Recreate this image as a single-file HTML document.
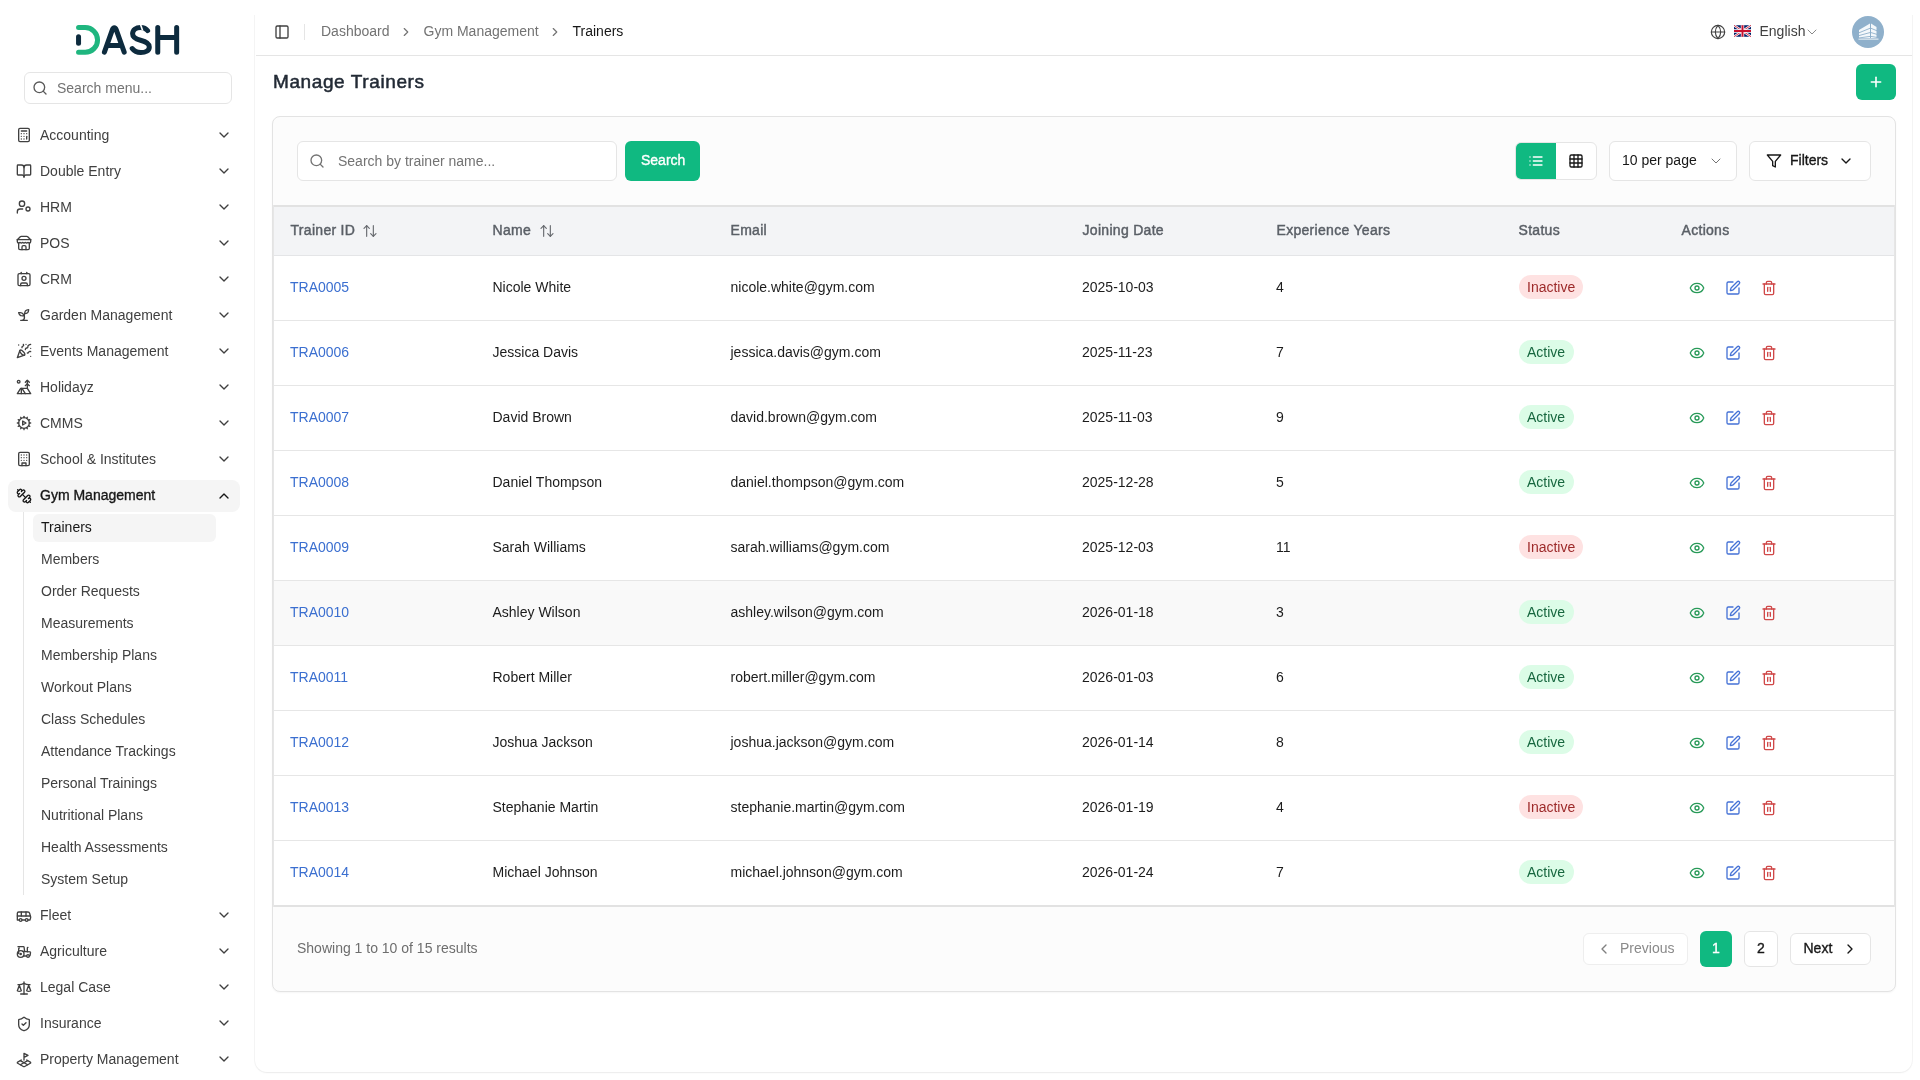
<!DOCTYPE html>
<html><head><meta charset="utf-8"><title>Manage Trainers</title>
<style>
*{box-sizing:border-box;margin:0;padding:0}
html,body{width:1920px;height:1080px;overflow:hidden;background:#fff}
body{position:relative;font-family:"Liberation Sans",sans-serif;color:#262626}
#root{position:absolute;left:0;top:0;width:1920px;height:1080px;will-change:transform}
.abs{position:absolute}
.t{position:absolute;white-space:nowrap}
svg.ic{position:absolute;fill:none;stroke:currentColor;stroke-linecap:round;stroke-linejoin:round;overflow:visible}
</style></head><body><div id="root">
<svg class="abs" style="left:70px;top:20px;width:115px;height:40px" viewBox="70 20 115 40">
<g fill="none" stroke-linecap="round" stroke-linejoin="round" stroke-width="5">
<path d="M78.55 27.55 H85.2 A12.35 12.35 0 0 1 85.2 52.25 H78.55" stroke="#1fb67f"/>
<path d="M78.55 36.7 V43.2" stroke="#0d2b3e"/>
<path d="M104.4 52.2 L112.4 29.6 Q113.1 27.7 114.3 27.7 Q115.5 27.7 116.2 29.6 L124.2 52.2 M107.6 45.4 H121" stroke="#0d2b3e"/>
<path d="M147.6 30.6 C146 28.4 143.5 27.4 140.5 27.4 C136 27.4 132.6 30 132.6 33.8 C132.6 38 136.5 39.3 140.5 40.3 C145 41.4 149.3 42.8 149.3 47 C149.3 50.8 145.5 52.6 140.8 52.6 C136.8 52.6 134 51 132.2 48.6" stroke="#0d2b3e"/>
<path d="M157.75 27.6 V52.3 M176.65 27.6 V52.3 M157.75 37.5 H176.65" stroke="#0d2b3e"/>
<path d="M140.2 23.5 L142.6 30.5" stroke="#fff" stroke-width="1.6" stroke-linecap="butt"/>
</g></svg>
<div class="abs" style="left:24px;top:72px;width:208px;height:32px;border:1px solid #e5e5e5;border-radius:6px;background:#fff"></div>
<svg class="ic" style="left:31.5px;top:80px;width:16px;height:16px;color:#595959;stroke-width:2" viewBox="0 0 24 24"><circle cx="11" cy="11" r="8"/><path d="m21 21-4.3-4.3"/></svg>
<div class="t" style="left:57px;top:78.0px;font-size:14px;line-height:20px;color:#737373;font-weight:400">Search menu...</div>
<svg class="ic" style="left:16px;top:127px;width:16px;height:16px;color:#404040;stroke-width:2" viewBox="0 0 24 24"><rect width="16" height="20" x="4" y="2" rx="2"/><line x1="8" x2="16" y1="6" y2="6"/><line x1="16" x2="16" y1="14" y2="18"/><path d="M16 10h.01"/><path d="M12 10h.01"/><path d="M8 10h.01"/><path d="M12 14h.01"/><path d="M8 14h.01"/><path d="M12 18h.01"/><path d="M8 18h.01"/></svg>
<div class="t" style="left:40px;top:125.0px;font-size:14px;line-height:20px;color:#404040;font-weight:400">Accounting</div>
<svg class="ic" style="left:216px;top:127px;width:16px;height:16px;color:#404040;stroke-width:2" viewBox="0 0 24 24"><path d="m6 9 6 6 6-6"/></svg>
<svg class="ic" style="left:16px;top:163px;width:16px;height:16px;color:#404040;stroke-width:2" viewBox="0 0 24 24"><path d="M12 7v14"/><path d="M3 18a1 1 0 0 1-1-1V4a1 1 0 0 1 1-1h5a4 4 0 0 1 4 4 4 4 0 0 1 4-4h5a1 1 0 0 1 1 1v13a1 1 0 0 1-1 1h-6a3 3 0 0 0-3 3 3 3 0 0 0-3-3z"/></svg>
<div class="t" style="left:40px;top:161.0px;font-size:14px;line-height:20px;color:#404040;font-weight:400">Double Entry</div>
<svg class="ic" style="left:216px;top:163px;width:16px;height:16px;color:#404040;stroke-width:2" viewBox="0 0 24 24"><path d="m6 9 6 6 6-6"/></svg>
<svg class="ic" style="left:16px;top:199px;width:16px;height:16px;color:#404040;stroke-width:2" viewBox="0 0 24 24"><circle cx="18" cy="15" r="3"/><circle cx="9" cy="7" r="4"/><path d="M10 15H6a4 4 0 0 0-4 4v2"/></svg>
<div class="t" style="left:40px;top:197.0px;font-size:14px;line-height:20px;color:#404040;font-weight:400">HRM</div>
<svg class="ic" style="left:216px;top:199px;width:16px;height:16px;color:#404040;stroke-width:2" viewBox="0 0 24 24"><path d="m6 9 6 6 6-6"/></svg>
<svg class="ic" style="left:16px;top:235px;width:16px;height:16px;color:#404040;stroke-width:2" viewBox="0 0 24 24"><path d="m2 7 4.41-4.41A2 2 0 0 1 7.83 2h8.34a2 2 0 0 1 1.42.59L22 7"/><path d="M4 12v8a2 2 0 0 0 2 2h12a2 2 0 0 0 2-2v-8"/><path d="M15 22v-4a2 2 0 0 0-2-2h-2a2 2 0 0 0-2 2v4"/><path d="M2 7h20"/><path d="M22 7v3a2 2 0 0 1-2 2a2.7 2.7 0 0 1-1.59-.63.7.7 0 0 0-.82 0A2.7 2.7 0 0 1 16 12a2.7 2.7 0 0 1-1.59-.63.7.7 0 0 0-.82 0A2.7 2.7 0 0 1 12 12a2.7 2.7 0 0 1-1.59-.63.7.7 0 0 0-.82 0A2.7 2.7 0 0 1 8 12a2.7 2.7 0 0 1-1.59-.63.7.7 0 0 0-.82 0A2.7 2.7 0 0 1 4 12a2 2 0 0 1-2-2V7"/></svg>
<div class="t" style="left:40px;top:233.0px;font-size:14px;line-height:20px;color:#404040;font-weight:400">POS</div>
<svg class="ic" style="left:216px;top:235px;width:16px;height:16px;color:#404040;stroke-width:2" viewBox="0 0 24 24"><path d="m6 9 6 6 6-6"/></svg>
<svg class="ic" style="left:16px;top:271px;width:16px;height:16px;color:#404040;stroke-width:2" viewBox="0 0 24 24"><path d="M16 2v2"/><path d="M7 22v-2a2 2 0 0 1 2-2h6a2 2 0 0 1 2 2v2"/><path d="M8 2v2"/><circle cx="12" cy="11" r="3"/><rect x="3" y="4" width="18" height="18" rx="2"/></svg>
<div class="t" style="left:40px;top:269.0px;font-size:14px;line-height:20px;color:#404040;font-weight:400">CRM</div>
<svg class="ic" style="left:216px;top:271px;width:16px;height:16px;color:#404040;stroke-width:2" viewBox="0 0 24 24"><path d="m6 9 6 6 6-6"/></svg>
<svg class="ic" style="left:16px;top:307px;width:16px;height:16px;color:#404040;stroke-width:2" viewBox="0 0 24 24"><path d="M7 20h10"/><path d="M10 20c5.5-2.5.8-6.4 3-10"/><path d="M9.5 9.4c1.1.8 1.8 2.2 2.3 3.7-2 .4-3.5.4-4.8-.3-1.2-.6-2.3-1.9-3-4.2 2.8-.5 4.4 0 5.5.8z"/><path d="M14.1 6a7 7 0 0 0-1.1 4c1.9-.1 3.3-.6 4.3-1.4 1-1 1.6-2.3 1.7-4.6-2.7.1-4 1-4.9 2z"/></svg>
<div class="t" style="left:40px;top:305.0px;font-size:14px;line-height:20px;color:#404040;font-weight:400">Garden Management</div>
<svg class="ic" style="left:216px;top:307px;width:16px;height:16px;color:#404040;stroke-width:2" viewBox="0 0 24 24"><path d="m6 9 6 6 6-6"/></svg>
<svg class="ic" style="left:16px;top:343px;width:16px;height:16px;color:#404040;stroke-width:2" viewBox="0 0 24 24"><path d="M5.8 11.3 2 22l10.7-3.79"/><path d="M4 3h.01"/><path d="M22 8h.01"/><path d="M15 2h.01"/><path d="M22 20h.01"/><path d="m22 2-2.24.75a2.9 2.9 0 0 0-1.96 3.12c.1.86-.57 1.63-1.45 1.63h-.38c-.86 0-1.6.6-1.76 1.44L14 10"/><path d="m22 13-.82-.33c-.86-.34-1.82.2-1.98 1.11c-.11.7-.72 1.22-1.43 1.22H17"/><path d="m11 2 .33.82c.34.86-.2 1.82-1.11 1.98C9.52 4.9 9 5.52 9 6.23V7"/><path d="M11 13c1.93 1.93 2.83 4.17 2 5-.83.83-3.07-.07-5-2-1.93-1.930-2.83-4.17-2-5 .83-.83 3.07.07 5 2Z"/></svg>
<div class="t" style="left:40px;top:341.0px;font-size:14px;line-height:20px;color:#404040;font-weight:400">Events Management</div>
<svg class="ic" style="left:216px;top:343px;width:16px;height:16px;color:#404040;stroke-width:2" viewBox="0 0 24 24"><path d="m6 9 6 6 6-6"/></svg>
<svg class="ic" style="left:16px;top:379px;width:16px;height:16px;color:#404040;stroke-width:2" viewBox="0 0 24 24"><circle cx="4" cy="4" r="2"/><path d="m14 5 3-3 3 3"/><path d="m14 10 3-3 3 3"/><path d="M17 14V2"/><path d="M17 14H7l-5 8h20Z"/><path d="M8 14v8"/><path d="m9 14 5 8"/></svg>
<div class="t" style="left:40px;top:377.0px;font-size:14px;line-height:20px;color:#404040;font-weight:400">Holidayz</div>
<svg class="ic" style="left:216px;top:379px;width:16px;height:16px;color:#404040;stroke-width:2" viewBox="0 0 24 24"><path d="m6 9 6 6 6-6"/></svg>
<svg class="ic" style="left:16px;top:415px;width:16px;height:16px;color:#404040;stroke-width:2" viewBox="0 0 24 24"><path d="M12 20a8 8 0 1 0 0-16 8 8 0 0 0 0 16Z"/><path d="M12 2v2"/><path d="M12 22v-2"/><path d="m17 20.66-1-1.73"/><path d="m20.66 17-1.73-1"/><path d="m3.34 7 1.73 1"/><path d="M2 12h2"/><path d="M22 12h-2"/><path d="m20.66 7-1.73 1"/><path d="m3.34 17 1.73-1"/><path d="m17 3.34-1 1.73"/><path d="m7 3.34 1 1.73"/><path d="m7 20.66 1-1.73"/><path d="M10 9v6l5-3z"/></svg>
<div class="t" style="left:40px;top:413.0px;font-size:14px;line-height:20px;color:#404040;font-weight:400">CMMS</div>
<svg class="ic" style="left:216px;top:415px;width:16px;height:16px;color:#404040;stroke-width:2" viewBox="0 0 24 24"><path d="m6 9 6 6 6-6"/></svg>
<svg class="ic" style="left:16px;top:451px;width:16px;height:16px;color:#404040;stroke-width:2" viewBox="0 0 24 24"><rect width="16" height="20" x="4" y="2" rx="2" ry="2"/><path d="M9 22v-4h6v4"/><path d="M8 6h.01"/><path d="M16 6h.01"/><path d="M12 6h.01"/><path d="M12 10h.01"/><path d="M12 14h.01"/><path d="M16 10h.01"/><path d="M16 14h.01"/><path d="M8 10h.01"/><path d="M8 14h.01"/></svg>
<div class="t" style="left:40px;top:449.0px;font-size:14px;line-height:20px;color:#404040;font-weight:400">School & Institutes</div>
<svg class="ic" style="left:216px;top:451px;width:16px;height:16px;color:#404040;stroke-width:2" viewBox="0 0 24 24"><path d="m6 9 6 6 6-6"/></svg>
<div class="abs" style="left:8px;top:480px;width:232px;height:32px;border-radius:8px;background:#f5f5f5"></div>
<svg class="ic" style="left:16px;top:488px;width:16px;height:16px;color:#171717;stroke-width:2" viewBox="0 0 24 24"><path d="M14.4 14.4 9.6 9.6"/><path d="M18.657 21.485a2 2 0 1 1-2.829-2.828l-1.767 1.768a2 2 0 1 1-2.829-2.829l6.364-6.364a2 2 0 1 1 2.829 2.829l-1.768 1.767a2 2 0 1 1 2.828 2.829z"/><path d="m21.5 21.5-1.4-1.4"/><path d="M3.9 3.9 2.5 2.5"/><path d="M6.404 12.768a2 2 0 1 1-2.829-2.829l1.768-1.767a2 2 0 1 1-2.828-2.829l2.828-2.828a2 2 0 1 1 2.829 2.828l1.767-1.768a2 2 0 1 1 2.829 2.829z"/></svg>
<div class="t" style="left:40px;top:485.0px;font-size:14px;line-height:20px;color:#171717;font-weight:400;-webkit-text-stroke:0.35px currentColor">Gym Management</div>
<svg class="ic" style="left:216px;top:488px;width:16px;height:16px;color:#171717;stroke-width:2" viewBox="0 0 24 24"><path d="m18 15-6-6-6 6"/></svg>
<div class="abs" style="left:23px;top:512px;width:1px;height:383px;background:#e5e5e5"></div>
<div class="abs" style="left:33px;top:514px;width:183px;height:28px;border-radius:6px;background:#f5f5f5"></div>
<div class="t" style="left:41px;top:517.0px;font-size:14px;line-height:20px;color:#171717;font-weight:400">Trainers</div>
<div class="t" style="left:41px;top:549.0px;font-size:14px;line-height:20px;color:#404040;font-weight:400">Members</div>
<div class="t" style="left:41px;top:581.0px;font-size:14px;line-height:20px;color:#404040;font-weight:400">Order Requests</div>
<div class="t" style="left:41px;top:613.0px;font-size:14px;line-height:20px;color:#404040;font-weight:400">Measurements</div>
<div class="t" style="left:41px;top:645.0px;font-size:14px;line-height:20px;color:#404040;font-weight:400">Membership Plans</div>
<div class="t" style="left:41px;top:677.0px;font-size:14px;line-height:20px;color:#404040;font-weight:400">Workout Plans</div>
<div class="t" style="left:41px;top:709.0px;font-size:14px;line-height:20px;color:#404040;font-weight:400">Class Schedules</div>
<div class="t" style="left:41px;top:741.0px;font-size:14px;line-height:20px;color:#404040;font-weight:400">Attendance Trackings</div>
<div class="t" style="left:41px;top:773.0px;font-size:14px;line-height:20px;color:#404040;font-weight:400">Personal Trainings</div>
<div class="t" style="left:41px;top:805.0px;font-size:14px;line-height:20px;color:#404040;font-weight:400">Nutritional Plans</div>
<div class="t" style="left:41px;top:837.0px;font-size:14px;line-height:20px;color:#404040;font-weight:400">Health Assessments</div>
<div class="t" style="left:41px;top:869.0px;font-size:14px;line-height:20px;color:#404040;font-weight:400">System Setup</div>
<svg class="ic" style="left:16px;top:907.6px;width:16px;height:16px;color:#404040;stroke-width:2" viewBox="0 0 24 24"><path d="M8 6v6"/><path d="M15 6v6"/><path d="M2 12h19.6"/><path d="M18 18h3s.5-1.7.8-2.8c.1-.4.2-.8.2-1.2 0-.4-.1-.8-.2-1.2l-1.4-5C20.1 6.8 19.1 6 18 6H4a2 2 0 0 0-2 2v10h3"/><circle cx="7" cy="18" r="2"/><path d="M9 18h5"/><circle cx="16" cy="18" r="2"/></svg>
<div class="t" style="left:40px;top:905.0px;font-size:14px;line-height:20px;color:#404040;font-weight:400">Fleet</div>
<svg class="ic" style="left:216px;top:907px;width:16px;height:16px;color:#404040;stroke-width:2" viewBox="0 0 24 24"><path d="m6 9 6 6 6-6"/></svg>
<svg class="ic" style="left:16px;top:943.6px;width:16px;height:16px;color:#404040;stroke-width:2" viewBox="0 0 24 24"><path d="m10 11 11 .9a1 1 0 0 1 .8 1.1l-.665 4.158a1 1 0 0 1-.988.842H20"/><path d="M16 18h-5"/><path d="M18 5a1 1 0 0 0-1 1v5.573"/><path d="M3 4h8.129a1 1 0 0 1 .99.863L13 11.246"/><path d="M4 14.218V7a1 1 0 0 1 1-1"/><circle cx="18" cy="18" r="2"/><circle cx="7" cy="15" r="5"/><circle cx="7" cy="15" r="1"/></svg>
<div class="t" style="left:40px;top:941.0px;font-size:14px;line-height:20px;color:#404040;font-weight:400">Agriculture</div>
<svg class="ic" style="left:216px;top:943px;width:16px;height:16px;color:#404040;stroke-width:2" viewBox="0 0 24 24"><path d="m6 9 6 6 6-6"/></svg>
<svg class="ic" style="left:16px;top:979.6px;width:16px;height:16px;color:#404040;stroke-width:2" viewBox="0 0 24 24"><path d="m16 16 3-8 3 8c-.87.65-1.92 1-3 1s-2.13-.35-3-1Z"/><path d="m2 16 3-8 3 8c-.87.65-1.92 1-3 1s-2.13-.35-3-1Z"/><path d="M7 21h10"/><path d="M12 3v18"/><path d="M3 7h2c2 0 5-1 7-2 2 1 5 2 7 2h2"/></svg>
<div class="t" style="left:40px;top:977.0px;font-size:14px;line-height:20px;color:#404040;font-weight:400">Legal Case</div>
<svg class="ic" style="left:216px;top:979px;width:16px;height:16px;color:#404040;stroke-width:2" viewBox="0 0 24 24"><path d="m6 9 6 6 6-6"/></svg>
<svg class="ic" style="left:16px;top:1015.6px;width:16px;height:16px;color:#404040;stroke-width:2" viewBox="0 0 24 24"><path d="M20 13c0 5-3.5 7.5-7.66 8.95a1 1 0 0 1-.67-.01C7.5 20.5 4 18 4 13V6a1 1 0 0 1 1-1c2 0 4.5-1.2 6.24-2.72a1.17 1.17 0 0 1 1.52 0C14.51 3.810 17 5 19 5a1 1 0 0 1 1 1z"/><path d="m9 12 2 2 4-4"/></svg>
<div class="t" style="left:40px;top:1013.0px;font-size:14px;line-height:20px;color:#404040;font-weight:400">Insurance</div>
<svg class="ic" style="left:216px;top:1015px;width:16px;height:16px;color:#404040;stroke-width:2" viewBox="0 0 24 24"><path d="m6 9 6 6 6-6"/></svg>
<svg class="ic" style="left:16px;top:1051.6px;width:16px;height:16px;color:#404040;stroke-width:2" viewBox="0 0 24 24"><path d="m12 8 6-3-6-3v10"/><path d="m8 11.99-5.5 3.14a1 1 0 0 0 0 1.74l8.5 4.86a2 2 0 0 0 2 0l8.5-4.86a1 1 0 0 0 0-1.740L16 12"/><path d="m6.49 12.85 11.02 6.3"/><path d="M17.51 12.85 6.5 19.15"/></svg>
<div class="t" style="left:40px;top:1049.0px;font-size:14px;line-height:20px;color:#404040;font-weight:400">Property Management</div>
<svg class="ic" style="left:216px;top:1051px;width:16px;height:16px;color:#404040;stroke-width:2" viewBox="0 0 24 24"><path d="m6 9 6 6 6-6"/></svg>
<div class="abs" style="left:255px;top:-20px;width:1657px;height:1092px;border-radius:0 0 12px 12px;background:#fff;box-shadow:0 0 0 1px rgba(0,0,0,0.035),0 1px 2px rgba(0,0,0,0.05)"></div>
<div class="abs" style="left:248px;top:0;width:12px;height:15px;background:#fff"></div>
<div class="abs" style="left:1906px;top:0;width:14px;height:15px;background:#fff"></div>
<div class="abs" style="left:256px;top:55px;width:1656px;height:1px;background:#e5e5e5"></div>
<svg class="ic" style="left:274px;top:24px;width:16px;height:16px;color:#404040;stroke-width:2" viewBox="0 0 24 24"><rect width="18" height="18" x="3" y="3" rx="2"/><path d="M9 3v18"/></svg>
<div class="abs" style="left:304px;top:24px;width:1px;height:16px;background:#e5e5e5"></div>
<div class="t" style="left:321px;top:21.0px;font-size:14px;line-height:20px;color:#737373;font-weight:400">Dashboard</div>
<svg class="ic" style="left:399px;top:25px;width:14px;height:14px;color:#737373;stroke-width:2" viewBox="0 0 24 24"><path d="m9 18 6-6-6-6"/></svg>
<div class="t" style="left:423.5px;top:21.0px;font-size:14px;line-height:20px;color:#737373;font-weight:400">Gym Management</div>
<svg class="ic" style="left:547.5px;top:25px;width:14px;height:14px;color:#737373;stroke-width:2" viewBox="0 0 24 24"><path d="m9 18 6-6-6-6"/></svg>
<div class="t" style="left:572.5px;top:21.0px;font-size:14px;line-height:20px;color:#171717;font-weight:400">Trainers</div>
<svg class="ic" style="left:1710px;top:24px;width:16px;height:16px;color:#404040;stroke-width:1.7" viewBox="0 0 24 24"><circle cx="12" cy="12" r="10"/><path d="M12 2a14.5 14.5 0 0 0 0 20 14.5 14.5 0 0 0 0-20"/><path d="M2 12h20"/></svg>
<svg class="abs" style="left:1734px;top:25px;width:17px;height:12px" viewBox="0 0 60 40">
<rect width="60" height="40" fill="#012169" rx="3"/>
<path d="M0 0 60 40M60 0 0 40" stroke="#fff" stroke-width="8"/>
<path d="M0 0 60 40M60 0 0 40" stroke="#C8102E" stroke-width="3"/>
<path d="M30 0v40M0 20h60" stroke="#fff" stroke-width="12"/>
<path d="M30 0v40M0 20h60" stroke="#C8102E" stroke-width="7"/>
</svg>
<div class="t" style="left:1759.5px;top:21.0px;font-size:14px;line-height:20px;color:#404040;font-weight:400">English</div>
<svg class="ic" style="left:1804px;top:24px;width:16px;height:16px;color:#808080;stroke-width:1.4" viewBox="0 0 24 24"><path d="m6 9 6 6 6-6"/></svg>
<svg class="abs" style="left:1852px;top:16px;width:32px;height:32px" viewBox="0 0 32 32">
<circle cx="16" cy="16" r="16" fill="#8fb0cb"/>
<g fill="#f4f8fb"><path d="M7 14 L18 7.5 V22 H7Z"/><path d="M19 7.5 L24.5 11 V22 H19Z"/><rect x="6.5" y="22.6" width="20" height="1"/></g>
<g stroke="#8fb0cb" stroke-width="0.9" fill="none"><path d="M6.5 17 L18.2 12.2"/><path d="M6.5 19.7 L18.2 16.5"/><path d="M6.5 22 L18.2 20.4"/><path d="M18.8 12.2 L25 14.8"/><path d="M18.8 16.5 L25 18.4"/><path d="M18.8 20.4 L25 21.4"/></g>
</svg>
<div class="t" style="left:273px;top:68.3px;font-size:19px;line-height:28px;color:#222a35;font-weight:400;letter-spacing:0.6px;-webkit-text-stroke:0.5px currentColor">Manage Trainers</div>
<div class="abs" style="left:1856px;top:64px;width:40px;height:36px;border-radius:6px;background:#10b981"></div>
<svg class="ic" style="left:1868px;top:74px;width:16px;height:16px;color:#fff;stroke-width:2.4" viewBox="0 0 24 24"><path d="M5 12h14"/><path d="M12 5v14"/></svg>
<div class="abs" style="left:272px;top:116px;width:1623.5px;height:875.5px;border:1px solid #e3e3e3;border-radius:8px;background:#fcfcfc;box-shadow:0 1px 2px rgba(0,0,0,0.04)"></div>
<div class="abs" style="left:297px;top:141px;width:320px;height:40px;border:1px solid #e5e5e5;border-radius:6px;background:#fff"></div>
<svg class="ic" style="left:309px;top:153px;width:16px;height:16px;color:#737373;stroke-width:2" viewBox="0 0 24 24"><circle cx="11" cy="11" r="8"/><path d="m21 21-4.3-4.3"/></svg>
<div class="t" style="left:338px;top:151.0px;font-size:14px;line-height:20px;color:#737373;font-weight:400">Search by trainer name...</div>
<div class="abs" style="left:625px;top:141px;width:75px;height:40px;border-radius:6px;background:#10b981"></div>
<div class="t" style="left:641px;top:149.8px;font-size:14px;line-height:20px;color:#fff;font-weight:400;-webkit-text-stroke:0.35px currentColor">Search</div>
<div class="abs" style="left:1515px;top:142px;width:82px;height:38px;border:1px solid #e5e5e5;border-radius:6px;background:#fff"></div>
<div class="abs" style="left:1516px;top:143px;width:40px;height:36px;border-radius:5px 0 0 5px;background:#10b981"></div>
<svg class="ic" style="left:1528px;top:153px;width:16px;height:16px;color:#fff;stroke-width:2" viewBox="0 0 24 24"><path d="M3 12h.01"/><path d="M3 18h.01"/><path d="M3 6h.01"/><path d="M8 12h13"/><path d="M8 18h13"/><path d="M8 6h13"/></svg>
<svg class="ic" style="left:1568px;top:153px;width:16px;height:16px;color:#171717;stroke-width:2" viewBox="0 0 24 24"><rect width="18" height="18" x="3" y="3" rx="2"/><path d="M3 9h18"/><path d="M3 15h18"/><path d="M9 3v18"/><path d="M15 3v18"/></svg>
<div class="abs" style="left:1609px;top:141px;width:128px;height:40px;border:1px solid #e5e5e5;border-radius:6px;background:#fff"></div>
<div class="t" style="left:1622px;top:150.0px;font-size:14px;line-height:20px;color:#171717;font-weight:400">10 per page</div>
<svg class="ic" style="left:1708px;top:152.5px;width:16px;height:16px;color:#737373;stroke-width:1.5" viewBox="0 0 24 24"><path d="m6 9 6 6 6-6"/></svg>
<div class="abs" style="left:1749px;top:141px;width:122px;height:40px;border:1px solid #e5e5e5;border-radius:6px;background:#fff"></div>
<svg class="ic" style="left:1766px;top:153px;width:16px;height:16px;color:#171717;stroke-width:2" viewBox="0 0 24 24"><path d="M22 3H2l8 9.46V19l4 2v-8.54L22 3z"/></svg>
<div class="t" style="left:1790px;top:150.0px;font-size:14px;line-height:20px;color:#171717;font-weight:400;-webkit-text-stroke:0.35px currentColor">Filters</div>
<svg class="ic" style="left:1837.5px;top:152.5px;width:16px;height:16px;color:#171717;stroke-width:2" viewBox="0 0 24 24"><path d="m6 9 6 6 6-6"/></svg>
<div class="abs" style="left:273px;top:205px;width:1622px;height:702px;background:#fff;border-top:2px solid #e2e2e2;border-bottom:2px solid #e2e2e2"></div>
<div class="abs" style="left:273px;top:207px;width:1622px;height:49px;background:#f3f4f6;border-bottom:1px solid #e4e5e7"></div>
<div class="t" style="left:290.5px;top:220.0px;font-size:14px;line-height:20px;color:#5a5f66;font-weight:400;-webkit-text-stroke:0.45px currentColor;letter-spacing:0.3px">Trainer ID</div>
<div class="t" style="left:492.5px;top:220.0px;font-size:14px;line-height:20px;color:#5a5f66;font-weight:400;-webkit-text-stroke:0.45px currentColor;letter-spacing:0.3px">Name</div>
<div class="t" style="left:730.5px;top:220.0px;font-size:14px;line-height:20px;color:#5a5f66;font-weight:400;-webkit-text-stroke:0.45px currentColor;letter-spacing:0.3px">Email</div>
<div class="t" style="left:1082.5px;top:220.0px;font-size:14px;line-height:20px;color:#5a5f66;font-weight:400;-webkit-text-stroke:0.45px currentColor;letter-spacing:0.3px">Joining Date</div>
<div class="t" style="left:1276.5px;top:220.0px;font-size:14px;line-height:20px;color:#5a5f66;font-weight:400;-webkit-text-stroke:0.45px currentColor;letter-spacing:0.3px">Experience Years</div>
<div class="t" style="left:1518.5px;top:220.0px;font-size:14px;line-height:20px;color:#5a5f66;font-weight:400;-webkit-text-stroke:0.45px currentColor;letter-spacing:0.3px">Status</div>
<div class="t" style="left:1681.5px;top:220.0px;font-size:14px;line-height:20px;color:#5a5f66;font-weight:400;-webkit-text-stroke:0.45px currentColor;letter-spacing:0.3px">Actions</div>
<svg class="ic" style="left:362px;top:223px;width:16px;height:16px;color:#66696e;stroke-width:1.7" viewBox="0 0 24 24"><path d="m21 16-4 4-4-4"/><path d="M17 20V4"/><path d="m3 8 4-4 4 4"/><path d="M7 4v16"/></svg>
<svg class="ic" style="left:539px;top:223px;width:16px;height:16px;color:#66696e;stroke-width:1.7" viewBox="0 0 24 24"><path d="m21 16-4 4-4-4"/><path d="M17 20V4"/><path d="m3 8 4-4 4 4"/><path d="M7 4v16"/></svg>
<div class="t" style="left:290px;top:277.0px;font-size:14px;line-height:20px;color:#3b6fd0;font-weight:400">TRA0005</div>
<div class="t" style="left:492.5px;top:277.0px;font-size:14px;line-height:20px;color:#1c1c1c;font-weight:400">Nicole White</div>
<div class="t" style="left:730.5px;top:277.0px;font-size:14px;line-height:20px;color:#1c1c1c;font-weight:400">nicole.white@gym.com</div>
<div class="t" style="left:1082px;top:277.0px;font-size:14px;line-height:20px;color:#1c1c1c;font-weight:400">2025-10-03</div>
<div class="t" style="left:1276px;top:277.0px;font-size:14px;line-height:20px;color:#1c1c1c;font-weight:400">4</div>
<div class="abs" style="left:1519px;top:275px;width:64px;height:24px;border-radius:12px;background:#fee2e2"></div>
<div class="t" style="left:1527px;top:277.0px;font-size:14px;line-height:20px;color:#9d2a2a;font-weight:400">Inactive</div>
<svg class="ic" style="left:1689px;top:280px;width:16px;height:16px;color:#279a58;stroke-width:2" viewBox="0 0 24 24"><path d="M2.062 12.348a1 1 0 0 1 0-.696 10.75 10.75 0 0 1 19.876 0 1 1 0 0 1 0 .696 10.75 10.75 0 0 1-19.876 0"/><circle cx="12" cy="12" r="3"/></svg>
<svg class="ic" style="left:1725px;top:279.5px;width:16px;height:16px;color:#4672d6;stroke-width:2" viewBox="0 0 24 24"><path d="M12 3H5a2 2 0 0 0-2 2v14a2 2 0 0 0 2 2h14a2 2 0 0 0 2-2v-7"/><path d="M18.375 2.625a1 1 0 0 1 3 3l-9.013 9.014a2 2 0 0 1-.853.505l-2.873.84a.5.5 0 0 1-.62-.62l.84-2.873a2 2 0 0 1 .506-.852z"/></svg>
<svg class="ic" style="left:1761px;top:279.5px;width:16px;height:16px;color:#d04848;stroke-width:2" viewBox="0 0 24 24"><path d="M3 6h18"/><path d="M19 6v14c0 1-1 2-2 2H7c-1 0-2-1-2-2V6"/><path d="M8 6V4c0-1 1-2 2-2h4c1 0 2 1 2 2v2"/><line x1="10" x2="10" y1="11" y2="17"/><line x1="14" x2="14" y1="11" y2="17"/></svg>
<div class="abs" style="left:273px;top:320px;width:1622px;height:1px;background:#e6e6e6"></div>
<div class="t" style="left:290px;top:342.0px;font-size:14px;line-height:20px;color:#3b6fd0;font-weight:400">TRA0006</div>
<div class="t" style="left:492.5px;top:342.0px;font-size:14px;line-height:20px;color:#1c1c1c;font-weight:400">Jessica Davis</div>
<div class="t" style="left:730.5px;top:342.0px;font-size:14px;line-height:20px;color:#1c1c1c;font-weight:400">jessica.davis@gym.com</div>
<div class="t" style="left:1082px;top:342.0px;font-size:14px;line-height:20px;color:#1c1c1c;font-weight:400">2025-11-23</div>
<div class="t" style="left:1276px;top:342.0px;font-size:14px;line-height:20px;color:#1c1c1c;font-weight:400">7</div>
<div class="abs" style="left:1519px;top:340px;width:55px;height:24px;border-radius:12px;background:#dcfce7"></div>
<div class="t" style="left:1527px;top:342.0px;font-size:14px;line-height:20px;color:#17673f;font-weight:400">Active</div>
<svg class="ic" style="left:1689px;top:345px;width:16px;height:16px;color:#279a58;stroke-width:2" viewBox="0 0 24 24"><path d="M2.062 12.348a1 1 0 0 1 0-.696 10.75 10.75 0 0 1 19.876 0 1 1 0 0 1 0 .696 10.75 10.75 0 0 1-19.876 0"/><circle cx="12" cy="12" r="3"/></svg>
<svg class="ic" style="left:1725px;top:344.5px;width:16px;height:16px;color:#4672d6;stroke-width:2" viewBox="0 0 24 24"><path d="M12 3H5a2 2 0 0 0-2 2v14a2 2 0 0 0 2 2h14a2 2 0 0 0 2-2v-7"/><path d="M18.375 2.625a1 1 0 0 1 3 3l-9.013 9.014a2 2 0 0 1-.853.505l-2.873.84a.5.5 0 0 1-.62-.62l.84-2.873a2 2 0 0 1 .506-.852z"/></svg>
<svg class="ic" style="left:1761px;top:344.5px;width:16px;height:16px;color:#d04848;stroke-width:2" viewBox="0 0 24 24"><path d="M3 6h18"/><path d="M19 6v14c0 1-1 2-2 2H7c-1 0-2-1-2-2V6"/><path d="M8 6V4c0-1 1-2 2-2h4c1 0 2 1 2 2v2"/><line x1="10" x2="10" y1="11" y2="17"/><line x1="14" x2="14" y1="11" y2="17"/></svg>
<div class="abs" style="left:273px;top:385px;width:1622px;height:1px;background:#e6e6e6"></div>
<div class="t" style="left:290px;top:407.0px;font-size:14px;line-height:20px;color:#3b6fd0;font-weight:400">TRA0007</div>
<div class="t" style="left:492.5px;top:407.0px;font-size:14px;line-height:20px;color:#1c1c1c;font-weight:400">David Brown</div>
<div class="t" style="left:730.5px;top:407.0px;font-size:14px;line-height:20px;color:#1c1c1c;font-weight:400">david.brown@gym.com</div>
<div class="t" style="left:1082px;top:407.0px;font-size:14px;line-height:20px;color:#1c1c1c;font-weight:400">2025-11-03</div>
<div class="t" style="left:1276px;top:407.0px;font-size:14px;line-height:20px;color:#1c1c1c;font-weight:400">9</div>
<div class="abs" style="left:1519px;top:405px;width:55px;height:24px;border-radius:12px;background:#dcfce7"></div>
<div class="t" style="left:1527px;top:407.0px;font-size:14px;line-height:20px;color:#17673f;font-weight:400">Active</div>
<svg class="ic" style="left:1689px;top:410px;width:16px;height:16px;color:#279a58;stroke-width:2" viewBox="0 0 24 24"><path d="M2.062 12.348a1 1 0 0 1 0-.696 10.75 10.75 0 0 1 19.876 0 1 1 0 0 1 0 .696 10.75 10.75 0 0 1-19.876 0"/><circle cx="12" cy="12" r="3"/></svg>
<svg class="ic" style="left:1725px;top:409.5px;width:16px;height:16px;color:#4672d6;stroke-width:2" viewBox="0 0 24 24"><path d="M12 3H5a2 2 0 0 0-2 2v14a2 2 0 0 0 2 2h14a2 2 0 0 0 2-2v-7"/><path d="M18.375 2.625a1 1 0 0 1 3 3l-9.013 9.014a2 2 0 0 1-.853.505l-2.873.84a.5.5 0 0 1-.62-.62l.84-2.873a2 2 0 0 1 .506-.852z"/></svg>
<svg class="ic" style="left:1761px;top:409.5px;width:16px;height:16px;color:#d04848;stroke-width:2" viewBox="0 0 24 24"><path d="M3 6h18"/><path d="M19 6v14c0 1-1 2-2 2H7c-1 0-2-1-2-2V6"/><path d="M8 6V4c0-1 1-2 2-2h4c1 0 2 1 2 2v2"/><line x1="10" x2="10" y1="11" y2="17"/><line x1="14" x2="14" y1="11" y2="17"/></svg>
<div class="abs" style="left:273px;top:450px;width:1622px;height:1px;background:#e6e6e6"></div>
<div class="t" style="left:290px;top:472.0px;font-size:14px;line-height:20px;color:#3b6fd0;font-weight:400">TRA0008</div>
<div class="t" style="left:492.5px;top:472.0px;font-size:14px;line-height:20px;color:#1c1c1c;font-weight:400">Daniel Thompson</div>
<div class="t" style="left:730.5px;top:472.0px;font-size:14px;line-height:20px;color:#1c1c1c;font-weight:400">daniel.thompson@gym.com</div>
<div class="t" style="left:1082px;top:472.0px;font-size:14px;line-height:20px;color:#1c1c1c;font-weight:400">2025-12-28</div>
<div class="t" style="left:1276px;top:472.0px;font-size:14px;line-height:20px;color:#1c1c1c;font-weight:400">5</div>
<div class="abs" style="left:1519px;top:470px;width:55px;height:24px;border-radius:12px;background:#dcfce7"></div>
<div class="t" style="left:1527px;top:472.0px;font-size:14px;line-height:20px;color:#17673f;font-weight:400">Active</div>
<svg class="ic" style="left:1689px;top:475px;width:16px;height:16px;color:#279a58;stroke-width:2" viewBox="0 0 24 24"><path d="M2.062 12.348a1 1 0 0 1 0-.696 10.75 10.75 0 0 1 19.876 0 1 1 0 0 1 0 .696 10.75 10.75 0 0 1-19.876 0"/><circle cx="12" cy="12" r="3"/></svg>
<svg class="ic" style="left:1725px;top:474.5px;width:16px;height:16px;color:#4672d6;stroke-width:2" viewBox="0 0 24 24"><path d="M12 3H5a2 2 0 0 0-2 2v14a2 2 0 0 0 2 2h14a2 2 0 0 0 2-2v-7"/><path d="M18.375 2.625a1 1 0 0 1 3 3l-9.013 9.014a2 2 0 0 1-.853.505l-2.873.84a.5.5 0 0 1-.62-.62l.84-2.873a2 2 0 0 1 .506-.852z"/></svg>
<svg class="ic" style="left:1761px;top:474.5px;width:16px;height:16px;color:#d04848;stroke-width:2" viewBox="0 0 24 24"><path d="M3 6h18"/><path d="M19 6v14c0 1-1 2-2 2H7c-1 0-2-1-2-2V6"/><path d="M8 6V4c0-1 1-2 2-2h4c1 0 2 1 2 2v2"/><line x1="10" x2="10" y1="11" y2="17"/><line x1="14" x2="14" y1="11" y2="17"/></svg>
<div class="abs" style="left:273px;top:515px;width:1622px;height:1px;background:#e6e6e6"></div>
<div class="t" style="left:290px;top:537.0px;font-size:14px;line-height:20px;color:#3b6fd0;font-weight:400">TRA0009</div>
<div class="t" style="left:492.5px;top:537.0px;font-size:14px;line-height:20px;color:#1c1c1c;font-weight:400">Sarah Williams</div>
<div class="t" style="left:730.5px;top:537.0px;font-size:14px;line-height:20px;color:#1c1c1c;font-weight:400">sarah.williams@gym.com</div>
<div class="t" style="left:1082px;top:537.0px;font-size:14px;line-height:20px;color:#1c1c1c;font-weight:400">2025-12-03</div>
<div class="t" style="left:1276px;top:537.0px;font-size:14px;line-height:20px;color:#1c1c1c;font-weight:400">11</div>
<div class="abs" style="left:1519px;top:535px;width:64px;height:24px;border-radius:12px;background:#fee2e2"></div>
<div class="t" style="left:1527px;top:537.0px;font-size:14px;line-height:20px;color:#9d2a2a;font-weight:400">Inactive</div>
<svg class="ic" style="left:1689px;top:540px;width:16px;height:16px;color:#279a58;stroke-width:2" viewBox="0 0 24 24"><path d="M2.062 12.348a1 1 0 0 1 0-.696 10.75 10.75 0 0 1 19.876 0 1 1 0 0 1 0 .696 10.75 10.75 0 0 1-19.876 0"/><circle cx="12" cy="12" r="3"/></svg>
<svg class="ic" style="left:1725px;top:539.5px;width:16px;height:16px;color:#4672d6;stroke-width:2" viewBox="0 0 24 24"><path d="M12 3H5a2 2 0 0 0-2 2v14a2 2 0 0 0 2 2h14a2 2 0 0 0 2-2v-7"/><path d="M18.375 2.625a1 1 0 0 1 3 3l-9.013 9.014a2 2 0 0 1-.853.505l-2.873.84a.5.5 0 0 1-.62-.62l.84-2.873a2 2 0 0 1 .506-.852z"/></svg>
<svg class="ic" style="left:1761px;top:539.5px;width:16px;height:16px;color:#d04848;stroke-width:2" viewBox="0 0 24 24"><path d="M3 6h18"/><path d="M19 6v14c0 1-1 2-2 2H7c-1 0-2-1-2-2V6"/><path d="M8 6V4c0-1 1-2 2-2h4c1 0 2 1 2 2v2"/><line x1="10" x2="10" y1="11" y2="17"/><line x1="14" x2="14" y1="11" y2="17"/></svg>
<div class="abs" style="left:273px;top:580px;width:1622px;height:65px;background:#f9f9f9"></div>
<div class="abs" style="left:273px;top:580px;width:1622px;height:1px;background:#e6e6e6"></div>
<div class="t" style="left:290px;top:602.0px;font-size:14px;line-height:20px;color:#3b6fd0;font-weight:400">TRA0010</div>
<div class="t" style="left:492.5px;top:602.0px;font-size:14px;line-height:20px;color:#1c1c1c;font-weight:400">Ashley Wilson</div>
<div class="t" style="left:730.5px;top:602.0px;font-size:14px;line-height:20px;color:#1c1c1c;font-weight:400">ashley.wilson@gym.com</div>
<div class="t" style="left:1082px;top:602.0px;font-size:14px;line-height:20px;color:#1c1c1c;font-weight:400">2026-01-18</div>
<div class="t" style="left:1276px;top:602.0px;font-size:14px;line-height:20px;color:#1c1c1c;font-weight:400">3</div>
<div class="abs" style="left:1519px;top:600px;width:55px;height:24px;border-radius:12px;background:#dcfce7"></div>
<div class="t" style="left:1527px;top:602.0px;font-size:14px;line-height:20px;color:#17673f;font-weight:400">Active</div>
<svg class="ic" style="left:1689px;top:605px;width:16px;height:16px;color:#279a58;stroke-width:2" viewBox="0 0 24 24"><path d="M2.062 12.348a1 1 0 0 1 0-.696 10.75 10.75 0 0 1 19.876 0 1 1 0 0 1 0 .696 10.75 10.75 0 0 1-19.876 0"/><circle cx="12" cy="12" r="3"/></svg>
<svg class="ic" style="left:1725px;top:604.5px;width:16px;height:16px;color:#4672d6;stroke-width:2" viewBox="0 0 24 24"><path d="M12 3H5a2 2 0 0 0-2 2v14a2 2 0 0 0 2 2h14a2 2 0 0 0 2-2v-7"/><path d="M18.375 2.625a1 1 0 0 1 3 3l-9.013 9.014a2 2 0 0 1-.853.505l-2.873.84a.5.5 0 0 1-.62-.62l.84-2.873a2 2 0 0 1 .506-.852z"/></svg>
<svg class="ic" style="left:1761px;top:604.5px;width:16px;height:16px;color:#d04848;stroke-width:2" viewBox="0 0 24 24"><path d="M3 6h18"/><path d="M19 6v14c0 1-1 2-2 2H7c-1 0-2-1-2-2V6"/><path d="M8 6V4c0-1 1-2 2-2h4c1 0 2 1 2 2v2"/><line x1="10" x2="10" y1="11" y2="17"/><line x1="14" x2="14" y1="11" y2="17"/></svg>
<div class="abs" style="left:273px;top:645px;width:1622px;height:1px;background:#e6e6e6"></div>
<div class="t" style="left:290px;top:667.0px;font-size:14px;line-height:20px;color:#3b6fd0;font-weight:400">TRA0011</div>
<div class="t" style="left:492.5px;top:667.0px;font-size:14px;line-height:20px;color:#1c1c1c;font-weight:400">Robert Miller</div>
<div class="t" style="left:730.5px;top:667.0px;font-size:14px;line-height:20px;color:#1c1c1c;font-weight:400">robert.miller@gym.com</div>
<div class="t" style="left:1082px;top:667.0px;font-size:14px;line-height:20px;color:#1c1c1c;font-weight:400">2026-01-03</div>
<div class="t" style="left:1276px;top:667.0px;font-size:14px;line-height:20px;color:#1c1c1c;font-weight:400">6</div>
<div class="abs" style="left:1519px;top:665px;width:55px;height:24px;border-radius:12px;background:#dcfce7"></div>
<div class="t" style="left:1527px;top:667.0px;font-size:14px;line-height:20px;color:#17673f;font-weight:400">Active</div>
<svg class="ic" style="left:1689px;top:670px;width:16px;height:16px;color:#279a58;stroke-width:2" viewBox="0 0 24 24"><path d="M2.062 12.348a1 1 0 0 1 0-.696 10.75 10.75 0 0 1 19.876 0 1 1 0 0 1 0 .696 10.75 10.75 0 0 1-19.876 0"/><circle cx="12" cy="12" r="3"/></svg>
<svg class="ic" style="left:1725px;top:669.5px;width:16px;height:16px;color:#4672d6;stroke-width:2" viewBox="0 0 24 24"><path d="M12 3H5a2 2 0 0 0-2 2v14a2 2 0 0 0 2 2h14a2 2 0 0 0 2-2v-7"/><path d="M18.375 2.625a1 1 0 0 1 3 3l-9.013 9.014a2 2 0 0 1-.853.505l-2.873.84a.5.5 0 0 1-.62-.62l.84-2.873a2 2 0 0 1 .506-.852z"/></svg>
<svg class="ic" style="left:1761px;top:669.5px;width:16px;height:16px;color:#d04848;stroke-width:2" viewBox="0 0 24 24"><path d="M3 6h18"/><path d="M19 6v14c0 1-1 2-2 2H7c-1 0-2-1-2-2V6"/><path d="M8 6V4c0-1 1-2 2-2h4c1 0 2 1 2 2v2"/><line x1="10" x2="10" y1="11" y2="17"/><line x1="14" x2="14" y1="11" y2="17"/></svg>
<div class="abs" style="left:273px;top:710px;width:1622px;height:1px;background:#e6e6e6"></div>
<div class="t" style="left:290px;top:732.0px;font-size:14px;line-height:20px;color:#3b6fd0;font-weight:400">TRA0012</div>
<div class="t" style="left:492.5px;top:732.0px;font-size:14px;line-height:20px;color:#1c1c1c;font-weight:400">Joshua Jackson</div>
<div class="t" style="left:730.5px;top:732.0px;font-size:14px;line-height:20px;color:#1c1c1c;font-weight:400">joshua.jackson@gym.com</div>
<div class="t" style="left:1082px;top:732.0px;font-size:14px;line-height:20px;color:#1c1c1c;font-weight:400">2026-01-14</div>
<div class="t" style="left:1276px;top:732.0px;font-size:14px;line-height:20px;color:#1c1c1c;font-weight:400">8</div>
<div class="abs" style="left:1519px;top:730px;width:55px;height:24px;border-radius:12px;background:#dcfce7"></div>
<div class="t" style="left:1527px;top:732.0px;font-size:14px;line-height:20px;color:#17673f;font-weight:400">Active</div>
<svg class="ic" style="left:1689px;top:735px;width:16px;height:16px;color:#279a58;stroke-width:2" viewBox="0 0 24 24"><path d="M2.062 12.348a1 1 0 0 1 0-.696 10.75 10.75 0 0 1 19.876 0 1 1 0 0 1 0 .696 10.75 10.75 0 0 1-19.876 0"/><circle cx="12" cy="12" r="3"/></svg>
<svg class="ic" style="left:1725px;top:734.5px;width:16px;height:16px;color:#4672d6;stroke-width:2" viewBox="0 0 24 24"><path d="M12 3H5a2 2 0 0 0-2 2v14a2 2 0 0 0 2 2h14a2 2 0 0 0 2-2v-7"/><path d="M18.375 2.625a1 1 0 0 1 3 3l-9.013 9.014a2 2 0 0 1-.853.505l-2.873.84a.5.5 0 0 1-.62-.62l.84-2.873a2 2 0 0 1 .506-.852z"/></svg>
<svg class="ic" style="left:1761px;top:734.5px;width:16px;height:16px;color:#d04848;stroke-width:2" viewBox="0 0 24 24"><path d="M3 6h18"/><path d="M19 6v14c0 1-1 2-2 2H7c-1 0-2-1-2-2V6"/><path d="M8 6V4c0-1 1-2 2-2h4c1 0 2 1 2 2v2"/><line x1="10" x2="10" y1="11" y2="17"/><line x1="14" x2="14" y1="11" y2="17"/></svg>
<div class="abs" style="left:273px;top:775px;width:1622px;height:1px;background:#e6e6e6"></div>
<div class="t" style="left:290px;top:797.0px;font-size:14px;line-height:20px;color:#3b6fd0;font-weight:400">TRA0013</div>
<div class="t" style="left:492.5px;top:797.0px;font-size:14px;line-height:20px;color:#1c1c1c;font-weight:400">Stephanie Martin</div>
<div class="t" style="left:730.5px;top:797.0px;font-size:14px;line-height:20px;color:#1c1c1c;font-weight:400">stephanie.martin@gym.com</div>
<div class="t" style="left:1082px;top:797.0px;font-size:14px;line-height:20px;color:#1c1c1c;font-weight:400">2026-01-19</div>
<div class="t" style="left:1276px;top:797.0px;font-size:14px;line-height:20px;color:#1c1c1c;font-weight:400">4</div>
<div class="abs" style="left:1519px;top:795px;width:64px;height:24px;border-radius:12px;background:#fee2e2"></div>
<div class="t" style="left:1527px;top:797.0px;font-size:14px;line-height:20px;color:#9d2a2a;font-weight:400">Inactive</div>
<svg class="ic" style="left:1689px;top:800px;width:16px;height:16px;color:#279a58;stroke-width:2" viewBox="0 0 24 24"><path d="M2.062 12.348a1 1 0 0 1 0-.696 10.75 10.75 0 0 1 19.876 0 1 1 0 0 1 0 .696 10.75 10.75 0 0 1-19.876 0"/><circle cx="12" cy="12" r="3"/></svg>
<svg class="ic" style="left:1725px;top:799.5px;width:16px;height:16px;color:#4672d6;stroke-width:2" viewBox="0 0 24 24"><path d="M12 3H5a2 2 0 0 0-2 2v14a2 2 0 0 0 2 2h14a2 2 0 0 0 2-2v-7"/><path d="M18.375 2.625a1 1 0 0 1 3 3l-9.013 9.014a2 2 0 0 1-.853.505l-2.873.84a.5.5 0 0 1-.62-.62l.84-2.873a2 2 0 0 1 .506-.852z"/></svg>
<svg class="ic" style="left:1761px;top:799.5px;width:16px;height:16px;color:#d04848;stroke-width:2" viewBox="0 0 24 24"><path d="M3 6h18"/><path d="M19 6v14c0 1-1 2-2 2H7c-1 0-2-1-2-2V6"/><path d="M8 6V4c0-1 1-2 2-2h4c1 0 2 1 2 2v2"/><line x1="10" x2="10" y1="11" y2="17"/><line x1="14" x2="14" y1="11" y2="17"/></svg>
<div class="abs" style="left:273px;top:840px;width:1622px;height:1px;background:#e6e6e6"></div>
<div class="t" style="left:290px;top:862.0px;font-size:14px;line-height:20px;color:#3b6fd0;font-weight:400">TRA0014</div>
<div class="t" style="left:492.5px;top:862.0px;font-size:14px;line-height:20px;color:#1c1c1c;font-weight:400">Michael Johnson</div>
<div class="t" style="left:730.5px;top:862.0px;font-size:14px;line-height:20px;color:#1c1c1c;font-weight:400">michael.johnson@gym.com</div>
<div class="t" style="left:1082px;top:862.0px;font-size:14px;line-height:20px;color:#1c1c1c;font-weight:400">2026-01-24</div>
<div class="t" style="left:1276px;top:862.0px;font-size:14px;line-height:20px;color:#1c1c1c;font-weight:400">7</div>
<div class="abs" style="left:1519px;top:860px;width:55px;height:24px;border-radius:12px;background:#dcfce7"></div>
<div class="t" style="left:1527px;top:862.0px;font-size:14px;line-height:20px;color:#17673f;font-weight:400">Active</div>
<svg class="ic" style="left:1689px;top:865px;width:16px;height:16px;color:#279a58;stroke-width:2" viewBox="0 0 24 24"><path d="M2.062 12.348a1 1 0 0 1 0-.696 10.75 10.75 0 0 1 19.876 0 1 1 0 0 1 0 .696 10.75 10.75 0 0 1-19.876 0"/><circle cx="12" cy="12" r="3"/></svg>
<svg class="ic" style="left:1725px;top:864.5px;width:16px;height:16px;color:#4672d6;stroke-width:2" viewBox="0 0 24 24"><path d="M12 3H5a2 2 0 0 0-2 2v14a2 2 0 0 0 2 2h14a2 2 0 0 0 2-2v-7"/><path d="M18.375 2.625a1 1 0 0 1 3 3l-9.013 9.014a2 2 0 0 1-.853.505l-2.873.84a.5.5 0 0 1-.62-.62l.84-2.873a2 2 0 0 1 .506-.852z"/></svg>
<svg class="ic" style="left:1761px;top:864.5px;width:16px;height:16px;color:#d04848;stroke-width:2" viewBox="0 0 24 24"><path d="M3 6h18"/><path d="M19 6v14c0 1-1 2-2 2H7c-1 0-2-1-2-2V6"/><path d="M8 6V4c0-1 1-2 2-2h4c1 0 2 1 2 2v2"/><line x1="10" x2="10" y1="11" y2="17"/><line x1="14" x2="14" y1="11" y2="17"/></svg>
<div class="abs" style="left:1894px;top:205px;width:1px;height:702px;background:#e6e6e6"></div>
<div class="abs" style="left:273px;top:205px;width:1px;height:702px;background:#e6e6e6"></div>
<div class="t" style="left:297px;top:938.0px;font-size:14px;line-height:20px;color:#6e6e6e;font-weight:400">Showing 1 to 10 of 15 results</div>
<div class="abs" style="left:1583px;top:933px;width:105px;height:32px;border:1px solid #eeeeee;border-radius:6px;background:#fff"></div>
<svg class="ic" style="left:1596px;top:940.5px;width:16px;height:16px;color:#808080;stroke-width:2" viewBox="0 0 24 24"><path d="m15 18-6-6 6-6"/></svg>
<div class="t" style="left:1620px;top:937.5px;font-size:14px;line-height:20px;color:#8a8a8a;font-weight:400">Previous</div>
<div class="abs" style="left:1700px;top:931px;width:32px;height:36px;border-radius:6px;background:#10b981"></div>
<div class="t" style="left:1712px;top:937.7px;font-size:14px;line-height:20px;color:#fff;font-weight:400;-webkit-text-stroke:0.35px currentColor">1</div>
<div class="abs" style="left:1744px;top:931px;width:34px;height:36px;border:1px solid #e5e5e5;border-radius:6px;background:#fff"></div>
<div class="t" style="left:1757px;top:937.7px;font-size:14px;line-height:20px;color:#171717;font-weight:400;-webkit-text-stroke:0.35px currentColor">2</div>
<div class="abs" style="left:1790px;top:933px;width:81px;height:32px;border:1px solid #e5e5e5;border-radius:6px;background:#fff"></div>
<div class="t" style="left:1803.5px;top:937.7px;font-size:14px;line-height:20px;color:#171717;font-weight:400;-webkit-text-stroke:0.35px currentColor">Next</div>
<svg class="ic" style="left:1842px;top:941px;width:16px;height:16px;color:#171717;stroke-width:2" viewBox="0 0 24 24"><path d="m9 18 6-6-6-6"/></svg>
</div></body></html>
